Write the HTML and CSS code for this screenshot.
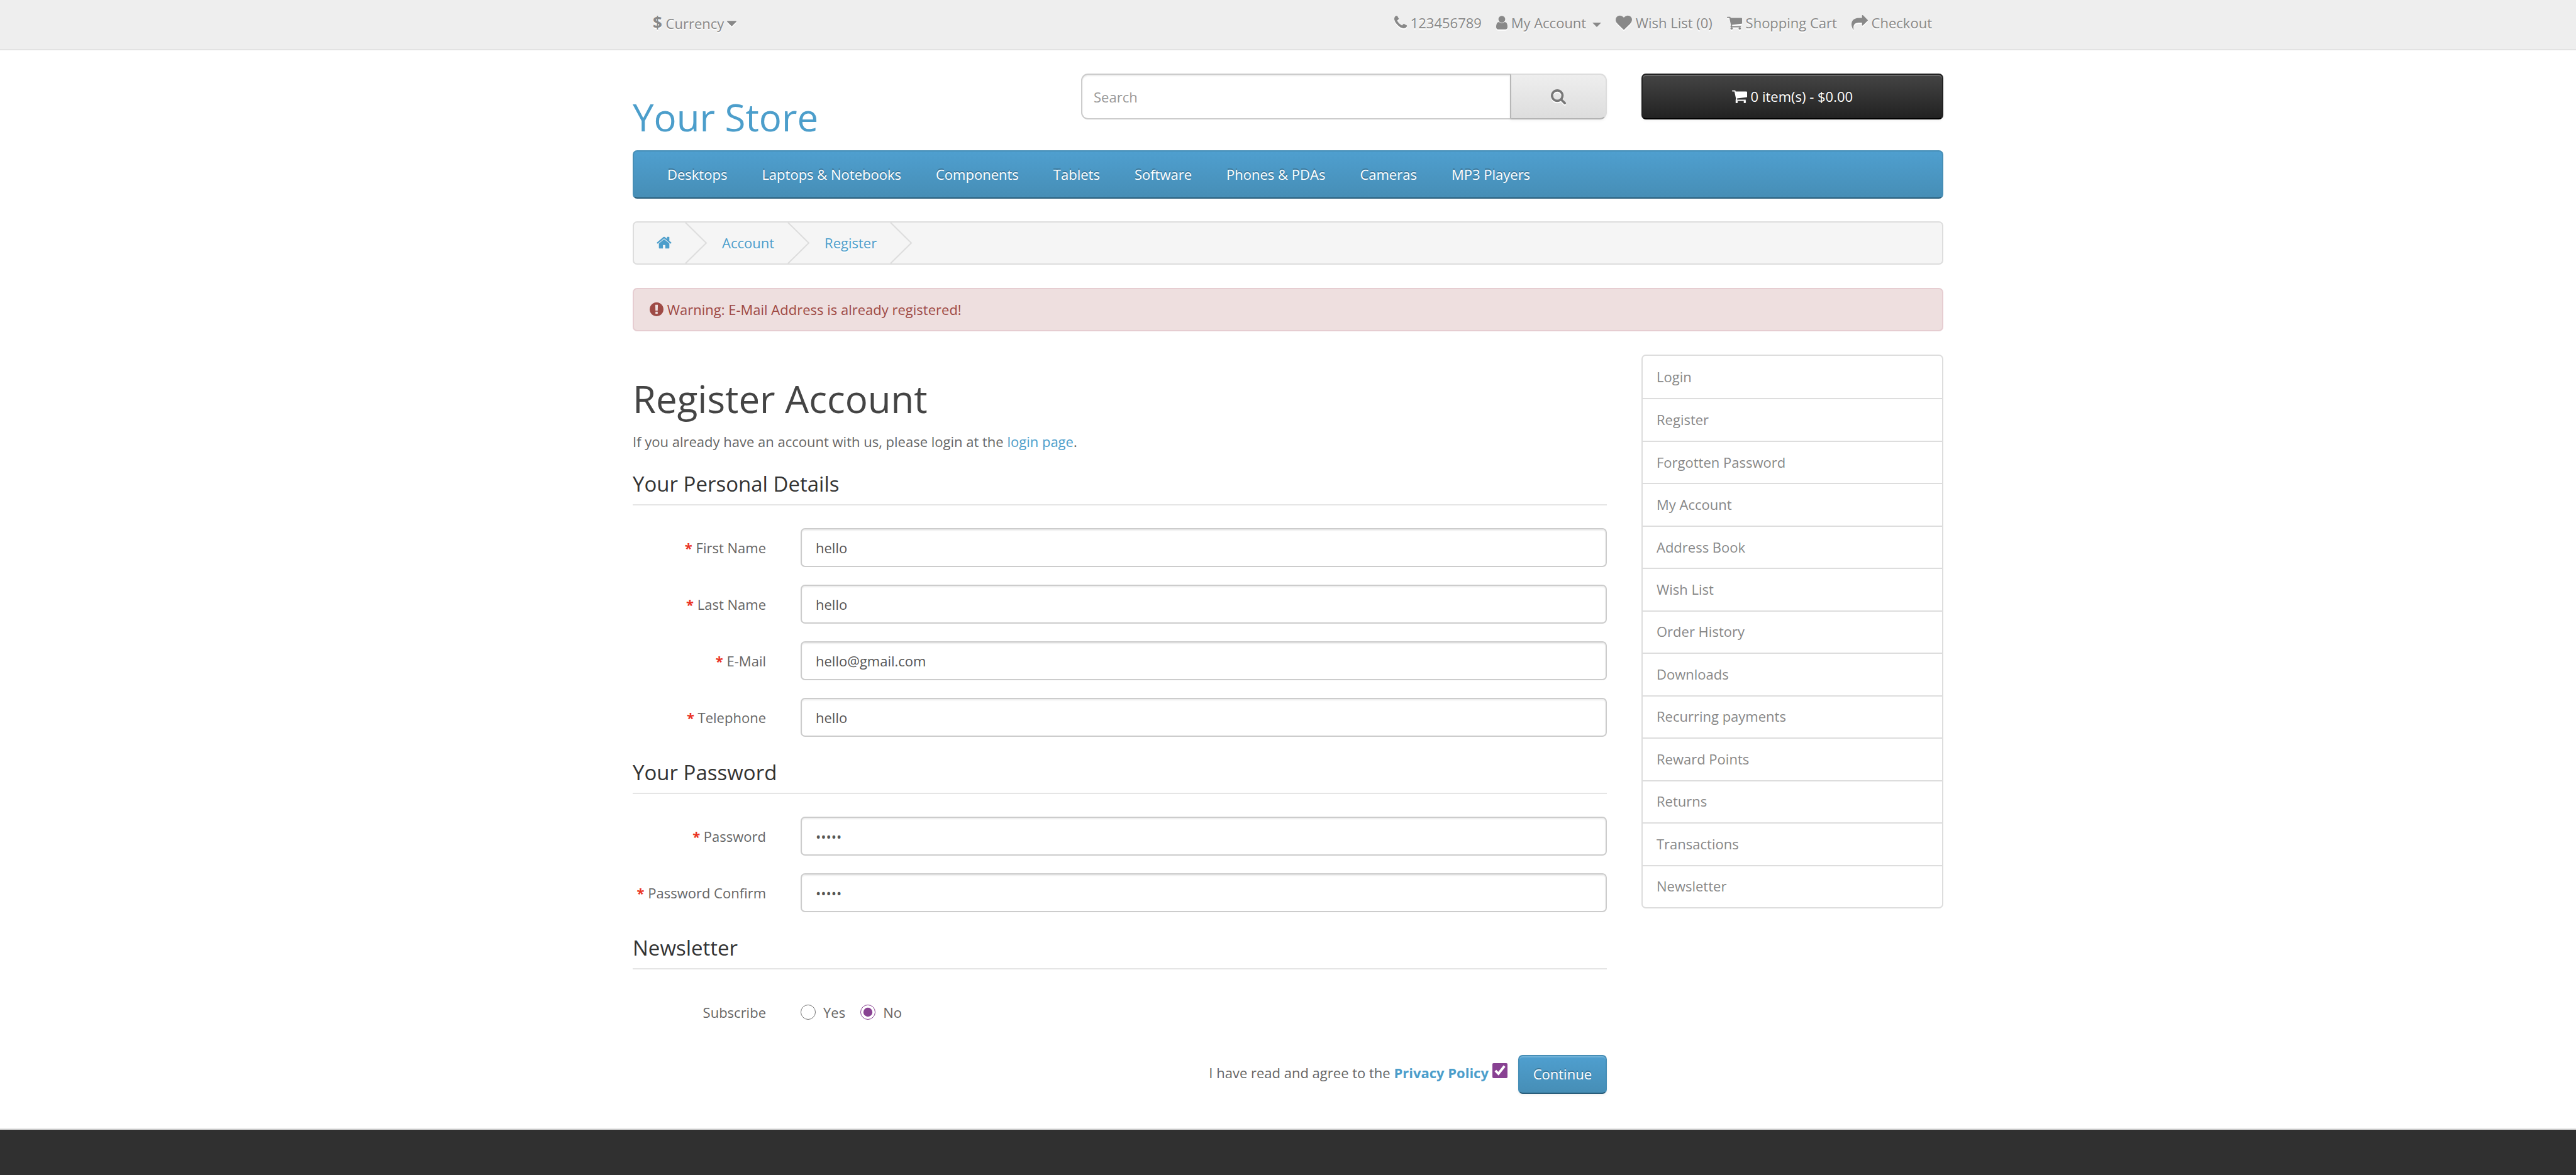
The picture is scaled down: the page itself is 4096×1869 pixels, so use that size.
FILE: index.html
```html
<!DOCTYPE html>
<html lang="en">
<head>
<meta charset="utf-8">
<meta name="viewport" content="width=device-width, initial-scale=1">
<title>Register Account</title>
<link rel="stylesheet" href="styles.css">
</head>
<body>
<svg class="sprite" aria-hidden="true">
  <symbol id="i-phone" viewBox="192 0 1408 1792"><path d="M1600 1240q0 27-10 70.5t-21 68.5q-21 50-122 106-94 51-186 51-27 0-53-3.5t-57.5-12.5-47-14.5-55.5-20.5-49-18q-98-35-175-83-127-79-264-216t-216-264q-48-77-83-175-3-9-18-49t-20.5-55.5-14.5-47-12.5-57.5-3.5-53q0-92 51-186 56-101 106-122 25-11 68.5-21t70.5-10q14 0 21 3 18 6 53 76 11 19 30 54t35 63.5 31 53.5q3 4 17.5 25t21.5 35.5 7 28.5q0 20-28.5 50t-62 55-62 53-28.5 46q0 9 5 22.5t8.5 20.5 14 24 11.5 19q76 137 174 235t235 174q2 1 19 11.5t24 14 20.5 8.5 22.5 5q18 0 46-28.5t53-62 55-62 50-28.5q14 0 28.5 7t35.5 21.5 25 17.5q25 15 53.5 31t63.5 35 54 30q70 35 76 53 3 7 3 21z"/></symbol>
  <symbol id="i-user" viewBox="256 0 1280 1792"><path d="M1536 1399q0 109-62.5 187t-150.5 78h-854q-88 0-150.5-78t-62.5-187q0-85 8.500-160.500t31.500-152 58.500-131 94-89 134.500-34.500q131 128 313 128t313-128q76 0 134.500 34.500t94 89 58.500 131 31.500 152 8.500 160.500zm-256-887q0 159-112.500 271.500t-271.500 112.500-271.500-112.500-112.500-271.500 112.500-271.500 271.500-112.500 271.500 112.500 112.500 271.500z"/></symbol>
  <symbol id="i-heart" viewBox="0 0 1792 1792"><path d="M896 1664q-26 0-44-18l-624-602q-10-8-27.500-26t-55.500-65.500-68-97.500-53.500-121-23.500-138q0-220 127-344t351-124q62 0 126.500 21.500t120 58 95.500 68.500 76 68q36-36 76-68t95.500-68.500 120-58 126.500-21.500q224 0 351 124t127 344q0 221-229 450l-623 600q-18 18-44 18z"/></symbol>
  <symbol id="i-cart" viewBox="64 0 1664 1792"><path d="M704 1536q0 52-38 90t-90 38-90-38-38-90 38-90 90-38 90 38 38 90zm896 0q0 52-38 90t-90 38-90-38-38-90 38-90 90-38 90 38 38 90zm128-1088v512q0 24-16.500 42.500t-40.500 21.500l-1044 122q13 60 13 70 0 16-24 64h920q26 0 45 19t19 45-19 45-45 19h-1024q-26 0-45-19t-19-45q0-11 8-31.500t16-36 21.500-40 15.500-29.500l-177-823h-204q-26 0-45-19t-19-45 19-45 45-19h256q16 0 28.500 6.500t19.500 15.500 13 24.500 8 26 5.500 29.500 4.500 26h1201q26 0 45 19t19 45z"/></symbol>
  <symbol id="i-share" viewBox="0 0 1792 1792"><path d="M1792 640q0 26-19 45l-512 512q-19 19-45 19t-45-19-19-45v-256h-224q-98 0-175.500 6t-154 21.500-133 42.500-105.500 69.500-80 101-48.500 138.500-17.500 181q0 55 5 123 0 6 2.500 23.500t2.500 26.500q0 15-8.500 25t-23.500 10q-16 0-28-17-7-9-13-22t-13.500-30-10.500-24q-127-285-127-451 0-199 53-333 162-403 875-403h224v-256q0-26 19-45t45-19 45 19l512 512q19 19 19 45z"/></symbol>
  <symbol id="i-search" viewBox="64 128 1664 1664"><path d="M1216 832q0-185-131.500-316.500t-316.500-131.500-316.500 131.500-131.500 316.500 131.500 316.500 316.500 131.500 316.500-131.500 131.500-316.500zm512 832q0 52-38 90t-90 38q-54 0-90-38l-343-342q-179 124-399 124-143 0-273.500-55.500t-225-150-150-225-55.500-273.500 55.500-273.500 150-225 225-150 273.500-55.500 273.500 55.500 225 150 150 225 55.500 273.500q0 220-124 399l343 343q37 37 37 90z"/></symbol>
  <symbol id="i-home" viewBox="64 0 1664 1792"><path d="M1472 992v480q0 26-19 45t-45 19h-384v-384h-256v384h-384q-26 0-45-19t-19-45v-480q0-1 .5-3t.5-3l575-474 575 474q1 2 1 6zm223-69l-62 74q-8 9-21 11h-3q-13 0-21-7l-692-577-692 577q-12 8-24 7-13-2-21-11l-62-74q-8-10-7-23.500t11-21.500l719-599q32-26 76-26t76 26l244 204v-195q0-14 9-23t23-9h192q14 0 23 9t9 23v408l219 182q10 8 11 21.500t-7 23.500z"/></symbol>
  <symbol id="i-warn" viewBox="128 0 1536 1792"><path d="M896 128q209 0 385.500 103t279.500 279.500 103 385.500-103 385.500-279.500 279.500-385.500 103-385.500-103-279.500-279.500-103-385.500 103-385.500 279.500-279.500 385.500-103zm128 1247v-190q0-14-9-23.500t-22-9.500h-192q-13 0-23 10t-10 23v190q0 13 10 23t23 10h192q13 0 22-9.500t9-23.500zm-2-344l18-621q0-12-10-18-10-8-24-8h-220q-14 0-24 8-10 6-10 18l18 621q0 10 10 17.500t24 7.500h185q14 0 23.500-7.500t10.500-17.500z"/></symbol>
  <symbol id="i-caret" viewBox="384 0 1024 1792"><path d="M1408 704q0 26-19 45l-448 448q-19 19-45 19t-45-19l-448-448q-19-19-19-45t19-45 45-19h896q26 0 45 19t19 45z"/></symbol>
  <symbol id="i-chevron" viewBox="0 0 36 65"><path d="M1 0 34 32.500 1 65" fill="none" stroke="#ddd" stroke-width="2"/></symbol>
</svg>

<nav class="top">
  <div class="container top-row">
    <button type="button" class="currency"><strong>$</strong> Currency <svg class="icon w15"><use href="#i-caret"/></svg></button>
    <ul class="top-links">
      <li><a href="#"><svg class="icon w20"><use href="#i-phone"/></svg></a> <span>123456789</span></li>
      <li><a href="#"><svg class="icon w18"><use href="#i-user"/></svg> My Account <span class="caret"></span></a></li>
      <li><a href="#"><svg class="icon w26"><use href="#i-heart"/></svg> Wish List (0)</a></li>
      <li><a href="#"><svg class="icon w24"><use href="#i-cart"/></svg> Shopping Cart</a></li>
      <li><a href="#"><svg class="icon w26"><use href="#i-share"/></svg> Checkout</a></li>
    </ul>
  </div>
</nav>

<header class="container header">
  <h1 class="logo"><a href="#">Your Store</a></h1>
  <form class="search">
    <input type="text" placeholder="Search" aria-label="Search">
    <button type="button" aria-label="Search"><svg class="search-icon"><use href="#i-search"/></svg></button>
  </form>
  <button type="button" class="cart"><svg class="icon w24"><use href="#i-cart"/></svg> 0 item(s) - $0.00</button>
</header>

<div class="container">
  <nav class="menu">
    <a href="#">Desktops</a>
    <a href="#">Laptops &amp; Notebooks</a>
    <a href="#">Components</a>
    <a href="#">Tablets</a>
    <a href="#">Software</a>
    <a href="#">Phones &amp; PDAs</a>
    <a href="#">Cameras</a>
    <a href="#">MP3 Players</a>
  </nav>

  <ul class="breadcrumb">
    <li><a href="#" aria-label="Home"><svg class="icon w24"><use href="#i-home"/></svg></a><svg class="chevron"><use href="#i-chevron"/></svg></li>
    <li><a href="#">Account</a><svg class="chevron"><use href="#i-chevron"/></svg></li>
    <li><a href="#">Register</a><svg class="chevron"><use href="#i-chevron"/></svg></li>
  </ul>

  <div class="alert" role="alert"><svg class="icon w22"><use href="#i-warn"/></svg> Warning: E-Mail Address is already registered!</div>

  <div class="columns">
    <main>
      <h1>Register Account</h1>
      <p>If you already have an account with us, please login at the <a href="#">login page</a>.</p>
      <form>
        <fieldset>
          <legend>Your Personal Details</legend>
          <div class="field"><label class="required" for="firstname">First Name</label><input id="firstname" type="text" value="hello"></div>
          <div class="field"><label class="required" for="lastname">Last Name</label><input id="lastname" type="text" value="hello"></div>
          <div class="field"><label class="required" for="email">E-Mail</label><input id="email" type="email" value="hello@gmail.com"></div>
          <div class="field"><label class="required" for="telephone">Telephone</label><input id="telephone" type="tel" value="hello"></div>
        </fieldset>
        <fieldset>
          <legend>Your Password</legend>
          <div class="field"><label class="required" for="password">Password</label><input id="password" type="password" value="hello"></div>
          <div class="field"><label class="required" for="confirm">Password Confirm</label><input id="confirm" type="password" value="hello"></div>
        </fieldset>
        <fieldset>
          <legend>Newsletter</legend>
          <div class="field subscribe">
            <span class="field-name">Subscribe</span>
            <div class="radios">
              <label><input type="radio" name="newsletter" value="1">Yes</label>
              <label><input type="radio" name="newsletter" value="0" checked>No</label>
            </div>
          </div>
        </fieldset>
        <div class="submit-row">
          <label for="agree">I have read and agree to the <a href="#"><b>Privacy Policy</b></a> <input id="agree" type="checkbox" checked></label>
          <button type="button" class="primary">Continue</button>
        </div>
      </form>
    </main>
    <aside>
      <nav class="side-list">
        <a href="#">Login</a>
        <a href="#">Register</a>
        <a href="#">Forgotten Password</a>
        <a href="#">My Account</a>
        <a href="#">Address Book</a>
        <a href="#">Wish List</a>
        <a href="#">Order History</a>
        <a href="#">Downloads</a>
        <a href="#">Recurring payments</a>
        <a href="#">Reward Points</a>
        <a href="#">Returns</a>
        <a href="#">Transactions</a>
        <a href="#">Newsletter</a>
      </nav>
    </aside>
  </div>
</div>

<footer></footer>
</body>
</html>
```
FILE: styles.css
```css
* { box-sizing: border-box; }

body {
  margin: 0;
  min-height: 100vh;
  display: flex;
  flex-direction: column;
  background: #fff;
  color: #666;
  font: 22px/36px "Open Sans", sans-serif;
}

a { color: #4c9ecb; text-decoration: none; }
ul { list-style: none; margin: 0; padding: 0; }
button, input { font: inherit; margin: 0; }
.sprite { display: none; }

.container { width: 100%; max-width: 2084px; margin: 0 auto; }

.icon { height: 26px; vertical-align: -4px; fill: currentColor; }
.w15 { width: 15px; }
.w18 { width: 18px; }
.w20 { width: 20px; }
.w22 { width: 22px; }
.w24 { width: 24px; }
.w26 { width: 26px; }

/* Top bar */
.top {
  background: #eee;
  border-bottom: 2px solid #e2e2e2;
  padding: 18px 0 24px;
}
.top-row {
  display: flex;
  justify-content: space-between;
  align-items: flex-start;
  padding: 0 18px 0 32px;
}
.top, .top a, .currency { color: #888; text-shadow: 0 2px 0 #fff; }
.top .icon { filter: drop-shadow(0 2px 0 #fff); }
.currency { height: 36px; background: none; border: 0; padding: 2px 0 0; line-height: 34px; }
.currency strong { font-size: 26px; line-height: 26px; }
.currency .icon { margin-left: -1px; }
.top-links { display: flex; gap: 23px; }
.caret {
  display: inline-block;
  margin-left: 4px;
  vertical-align: middle;
  border-top: 7px solid;
  border-left: 7px solid transparent;
  border-right: 7px solid transparent;
}

/* Header */
.header {
  display: grid;
  grid-template-columns: 658fr 836fr 480fr;
  column-gap: 55px;
  align-items: start;
  padding-top: 37px;
}
.logo { margin: 36px 0 20px; font-size: 60px; line-height: 66px; font-weight: 400; }
.search { display: flex; height: 73px; }
.search input {
  flex: 1;
  min-width: 0;
  padding: 0 18px;
  border: 2px solid #ccc;
  border-right: 0;
  border-radius: 11px 0 0 11px;
  box-shadow: inset 0 2px 2px rgba(0, 0, 0, .075);
  color: #555;
}
.search input::placeholder { color: #999; opacity: 1; }
.search button {
  width: 154px;
  display: flex;
  align-items: center;
  justify-content: center;
  border: 2px solid;
  border-color: #ddd #ddd #b3b3b3 #b7b7b7;
  border-radius: 0 11px 11px 0;
  background: linear-gradient(#eee, #ddd);
  box-shadow: 0 2px 4px rgba(0, 0, 0, .05);
}
.search-icon { width: 24px; height: 24px; fill: #777; filter: drop-shadow(0 2px 0 #fff); }
.cart {
  height: 73px;
  padding: 0 0 2px;
  border: 2px solid;
  border-color: #222 #222 #000;
  border-radius: 7px;
  background: linear-gradient(#444, #222);
  box-shadow: inset 0 2px 0 rgba(255, 255, 255, .2), 0 2px 4px rgba(0, 0, 0, .05);
  color: #fff;
  text-shadow: 0 -2px 0 rgba(0, 0, 0, .25);
}

/* Menu */
.menu {
  display: flex;
  gap: 55px;
  padding: 18px 53px 19px;
  border: 2px solid;
  border-color: #468eb6 #468eb6 #295d7a;
  border-radius: 7px;
  background: linear-gradient(#4f9fcf, #468eb6);
}
.menu a { color: #fff; text-shadow: 0 -2px 0 rgba(0, 0, 0, .25); }

/* Breadcrumb */
.breadcrumb {
  display: flex;
  height: 69px;
  margin-top: 36px;
  padding-left: 12px;
  border: 2px solid #ddd;
  border-radius: 7px;
  background: #f5f5f5;
  text-shadow: 0 2px 0 #fff;
}
.breadcrumb li { display: flex; align-items: center; padding-left: 23px; }
.breadcrumb li:first-child { padding-left: 24px; }
.breadcrumb a { padding-bottom: 2px; }
.chevron { width: 36px; height: 65px; margin-left: 21px; }

.alert {
  margin: 37px 0;
  padding: 14px 25px 15px;
  border: 2px solid #e6cdd1;
  border-radius: 7px;
  background: #eedfdf;
  color: #9e4a45;
}

/* Page body */
.columns {
  display: grid;
  grid-template-columns: 1549fr 480fr;
  column-gap: 55px;
  align-items: start;
}
main h1 { margin: 37px 0 17px; font-size: 60px; line-height: 66px; font-weight: 400; color: #444; }
main p { margin: 0 0 30px; }

fieldset { min-width: 0; margin: 0 0 37px; padding: 0; border: 0; }
legend {
  width: 100%;
  margin-bottom: 36px;
  padding: 0 0 12px;
  border-bottom: 2px solid #e5e5e5;
  font-size: 33px;
  line-height: 40px;
  color: #333;
}
.field { display: flex; align-items: center; gap: 55px; }
.field + .field { margin-top: 28px; }
.field > label, .field-name { width: 212px; text-align: right; white-space: nowrap; }
.required::before { content: "* "; color: #ea3323; font-weight: 700; }
.field > input {
  flex: 1;
  min-width: 0;
  height: 62px;
  padding: 0 22px;
  border: 2px solid #ccc;
  border-radius: 7px;
  background: #fff;
  box-shadow: inset 0 2px 2px rgba(0, 0, 0, .075);
  color: #555;
}
.subscribe { padding: 14px 0; }
.radios { display: flex; gap: 24px; }
.radios label { display: flex; align-items: center; gap: 12px; }
.radios input, .submit-row input { width: 24px; height: 24px; accent-color: #884192; }

.submit-row { display: flex; justify-content: flex-end; gap: 17px; margin-top: -1px; }
.submit-row label { padding-top: 10px; }
.submit-row input { vertical-align: baseline; }
.primary {
  height: 62px;
  padding: 0 22px 2px;
  border: 2px solid;
  border-color: #468eb6 #468eb6 #295d7a;
  border-radius: 7px;
  background: linear-gradient(#4f9fcf, #468eb6);
  box-shadow: inset 0 2px 0 rgba(255, 255, 255, .2), 0 2px 4px rgba(0, 0, 0, .05);
  color: #fff;
  text-shadow: 0 -2px 0 rgba(0, 0, 0, .25);
}

.side-list {
  display: grid;
  grid-auto-rows: 1fr;
  min-height: 881px;
  border: 2px solid #ddd;
  border-radius: 7px;
}
.side-list a { display: flex; align-items: center; padding: 0 22px 2px; color: #888; }
.side-list a + a { border-top: 2px solid #ddd; }

footer {
  flex: 1;
  min-height: 74px;
  margin-top: 55px;
  border-top: 2px solid #ddd;
  background: #303030;
}
```
